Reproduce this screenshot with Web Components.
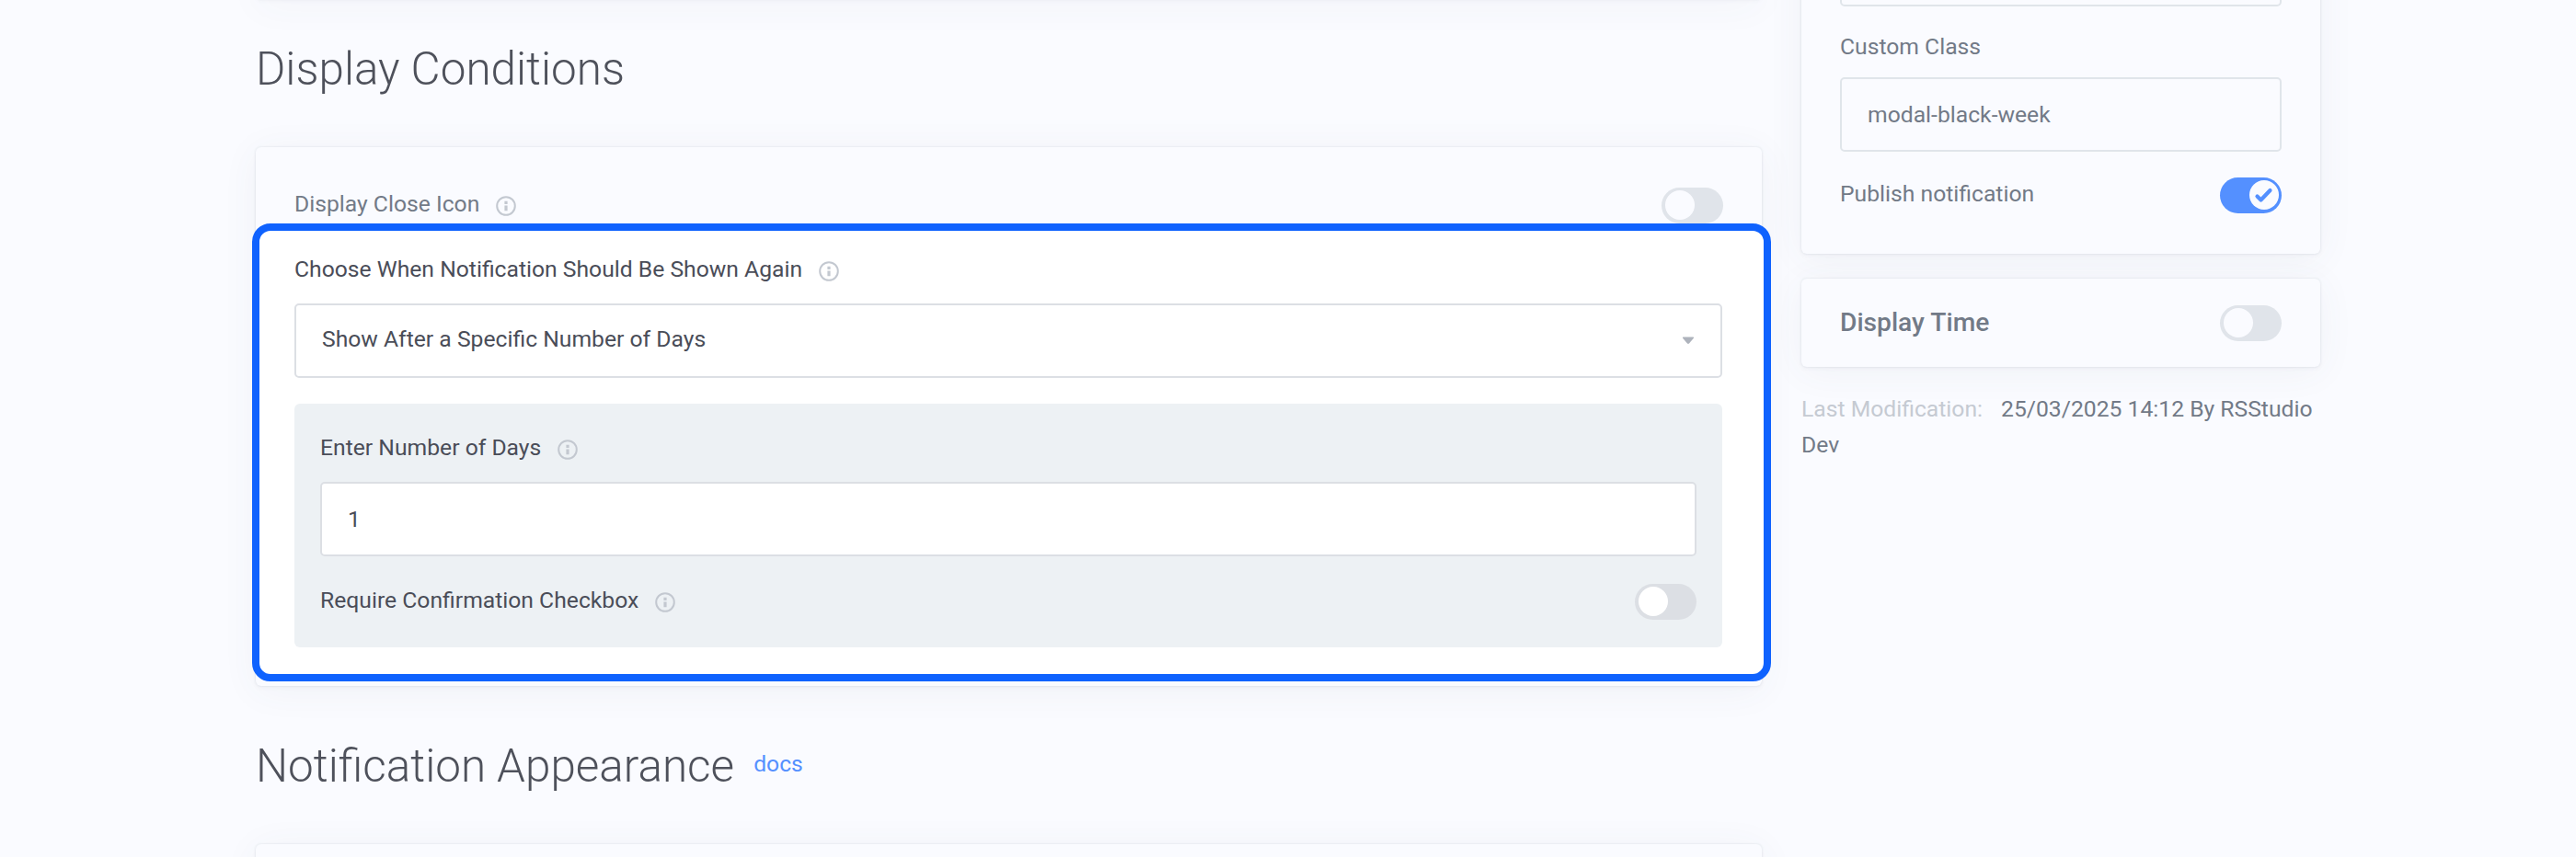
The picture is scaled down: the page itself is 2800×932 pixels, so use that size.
<!DOCTYPE html>
<html lang="en"><head><meta charset="utf-8"><title>Notification settings</title>
<style>
html,body{margin:0;height:100%}
body{background:#fafbff;font-family:Roboto,"Liberation Sans",sans-serif;font-size:24.7px;overflow:hidden}
</style></head><body>
<settings-page></settings-page>
<script>
function define(name, html){
  customElements.define(name, class extends HTMLElement{
    constructor(){super();this.attachShadow({mode:'open'}).innerHTML='<style>*{box-sizing:border-box}:host{box-sizing:border-box}</style>'+html;}
  });
}
define('info-icon',`<style>:host{display:block;width:22px;height:22px;flex:none}svg{display:block}</style>
<svg width="22" height="22" viewBox="0 0 22 22"><circle cx="11" cy="11" r="9.8" fill="none" stroke="#c3c8d0" stroke-width="2"/><path d="M9.4 5.8h3.200v3.200h-3.200zM9.400 10.500h3.200v5.800h-3.200z" fill="#c3c8d0"/></svg>`);
define('field-label',`<style>:host{display:flex;align-items:center;height:38px;line-height:38px;color:var(--ink,#4a4d58);white-space:nowrap}
info-icon{margin-left:18px;position:relative;top:2px}:host([plain]) info-icon{display:none}</style><slot></slot><info-icon></info-icon>`);
define('toggle-switch',`<style>:host{display:block;width:67px;height:39px;border-radius:20px;background:var(--track,#dcdfe4);padding:3px 4px;flex:none}
.knob{width:32px;height:32px;border-radius:50%;background:var(--knob,#fff)}svg{display:none}
:host([on]){background:#5490ff}:host([on]) .knob{margin-left:28px}:host([on]) svg{display:block}</style>
<div class="knob"><svg width="32" height="32" viewBox="0 0 32 32"><path d="M8.5 17.500l4 4L22.500 11" fill="none" stroke="#5490ff" stroke-width="4.200" stroke-linecap="round" stroke-linejoin="round"/></svg></div>`);
define('text-field',`<style>:host{display:flex;align-items:center;justify-content:space-between;height:81px;border:2px solid var(--line,#dcdfe4);border-radius:5px;padding:0 28px 1px;background:var(--fill,#fff);color:var(--ink,#4a4d58)}
svg{display:none}:host([select]){padding-bottom:4px}:host([select]) svg{display:block;margin-top:3px}</style><slot></slot><svg width="14" height="9" viewBox="0 0 14 9"><path d="M1.5.5h11q1 .4.4 1.2L8 7.6q-1 .9-2 0L1.1 1.700Q.6.8 1.500.5z" fill="#aeb3bc"/></svg>`);
define('setting-row',`<style>:host{display:flex;justify-content:space-between;align-items:flex-start}</style><slot></slot>`);
define('panel-card',`<style>:host{display:block;background:#fafbff;border-radius:6px;box-shadow:0 0 2px 1px rgba(70,80,95,.06),0 2px 5px rgba(70,80,95,.04),0 5px 40px rgba(70,80,95,.06)}</style><slot></slot>`);
define('section-title',`<style>:host{display:flex;font-size:49.4px;font-weight:300;line-height:60px;color:#4e515b;white-space:nowrap}
::slotted(a){font-size:24.7px;font-weight:400;line-height:56px;color:#5490ff;margin-left:21px}</style><slot></slot>`);
define('highlight-frame',`<style>:host{display:block;border:8px solid #0f62fe;border-radius:20px;background:#fff}</style><slot></slot>`);
define('day-options',`<style>:host{display:block;background:#edf1f4;border-radius:6px;height:265px;padding:29px 28px 0}
text-field{margin:18px 0 27px}field-label.confirm{margin-top:2px}toggle-switch{margin-top:3px}</style>
<field-label>Enter Number of Days</field-label><text-field>1</text-field>
<setting-row><field-label class="confirm">Require Confirmation Checkbox</field-label><toggle-switch></toggle-switch></setting-row>`);
define('display-conditions',`<style>:host{display:block;width:1637px}
.previous{height:20px;margin-top:-21px}.title{margin-top:46px}
.card{height:586px;margin-top:55px}
.top{padding:44px 42px 0;height:83px;--ink:#727a87;--track:#e0e4ea;--knob:#fafbff}.top field-label{margin-top:-1px}
highlight-frame{margin:0 -10px 0 -4px;height:498px;padding:23px 45px 0 38px;position:relative}
.pick{margin-top:18px}day-options{margin-top:28px}
.appearance{margin-top:57px}.next{margin-top:55px;height:80px}</style>
<panel-card class="previous"></panel-card>
<section-title class="title">Display Conditions</section-title>
<panel-card class="card"><setting-row class="top"><field-label>Display Close Icon</field-label><toggle-switch></toggle-switch></setting-row>
<highlight-frame><field-label>Choose When Notification Should Be Shown Again</field-label><text-field select class="pick">Show After a Specific Number of Days</text-field><day-options></day-options></highlight-frame></panel-card>
<section-title class="appearance">Notification Appearance<a>docs</a></section-title>
<panel-card class="next"></panel-card>`);
define('publish-sidebar',`<style>:host{display:block;width:564px;--ink:#727a87;--track:#e0e4ea;--knob:#fafbff;--line:#e0e5ea;--fill:#fafbff;color:#727a87}
.first{margin-top:-60px}.main{display:flow-root;height:336px;padding:0 42px}.cut{margin-top:-14px}.main field-label{margin-top:25px}.cls{margin-top:14px}
.main setting-row{margin-top:28px}.main setting-row field-label{margin-top:-1px}
.time{display:flex;align-items:center;height:96px;margin-top:27px;padding:0 42px;justify-content:space-between}
b{font-weight:500;font-size:28.2px;line-height:36px;margin-bottom:1px}p{margin:27px 0 0;line-height:38.6px}p span{color:#c5cad2;margin-right:20px}</style>
<panel-card class="first"><div class="main"><text-field class="cut"></text-field><field-label plain>Custom Class</field-label><text-field class="cls">modal-black-week</text-field>
<setting-row><field-label plain>Publish notification</field-label><toggle-switch on></toggle-switch></setting-row></div></panel-card>
<panel-card class="time"><b>Display Time</b><toggle-switch></toggle-switch></panel-card>
<p><span>Last Modification:</span>25/03/2025 14:12 By RSStudio Dev</p>`);
define('settings-page',`<style>:host{display:flex;gap:43px;padding-left:278px;height:932px;overflow:hidden}</style><display-conditions></display-conditions><publish-sidebar></publish-sidebar>`);
</script></body></html>
